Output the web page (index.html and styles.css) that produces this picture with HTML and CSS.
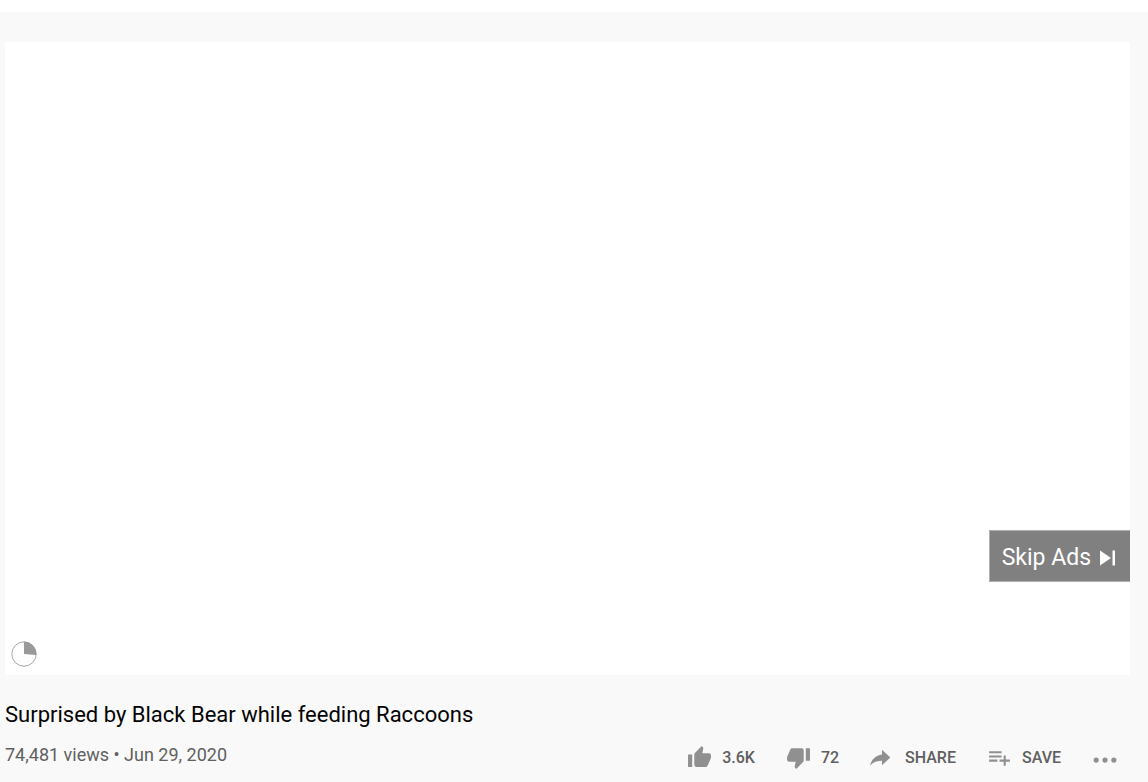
FILE: index.html
```html
<!DOCTYPE html>
<html lang="en">
<head>
    <meta charset="UTF-8">
    <meta name="viewport" content="width=device-width, initial-scale=1.0">
    <title>Surprised by Black Bear while feeding Raccoons</title>
    <link rel="stylesheet" href="styles.css">
</head>
<body>
    <header class="masthead"></header>

    <main class="watch">
        <div class="player">
            <svg class="ad-progress" viewBox="0 0 26 26" aria-hidden="true">
                <circle cx="13" cy="13" r="12.2" fill="none" stroke="#a8a8a8" stroke-width="1"/>
                <path d="M13 13V.8A12.2 12.2 0 0 1 25.2 14z" fill="#999"/>
            </svg>
            <button class="skip-button" type="button">
                <span>Skip Ads</span>
                <svg class="skip-icon" viewBox="0 0 16 16" aria-hidden="true">
                    <path d="M0 0.500L11 8L0 15.500zM12.500 0.500h2.500v15h-2.500z"/>
                </svg>
            </button>
        </div>

        <h1 class="title">Surprised by Black Bear while feeding Raccoons</h1>

        <div class="info">
            <p class="stats">74,481 views • Jun 29, 2020</p>
            <div class="actions">
                <button class="action" type="button">
                    <svg class="icon" viewBox="0 0 24 24" aria-hidden="true">
                        <path d="M1 21h4V9H1v12zm22-11c0-1.100-.9-2-2-2h-6.310l.95-4.570.03-.32c0-.41-.17-.79-.44-1.060L14.170 1 7.590 7.590C7.220 7.950 7 8.450 7 9v10c0 1.100.9 2 2 2h9c.83 0 1.540-.5 1.840-1.220l3.020-7.050c.09-.23.14-.47.14-.73v-2z"/>
                    </svg>
                    <span>3.6K</span>
                </button>
                <button class="action" type="button">
                    <svg class="icon" viewBox="0 0 24 24" aria-hidden="true">
                        <path d="M15 3H6c-.83 0-1.540.5-1.840 1.220l-3.020 7.050c-.09.23-.14.47-.14.73v2c0 1.100.9 2 2 2h6.310l-.95 4.570-.03.32c0 .41.17.79.44 1.060L9.830 23l6.590-6.590c.36-.36.58-.86.58-1.410V5c0-1.100-.9-2-2-2zm4 0v12h4V3h-4z"/>
                    </svg>
                    <span>72</span>
                </button>
                <button class="action" type="button">
                    <svg class="icon" viewBox="3 0 24 24" aria-hidden="true">
                        <path d="M14.500 9V4.500L22.500 12l-8 7.500V15C9.500 15 6 16.500 3 20c1-5 4.500-10 11.500-11z"/>
                    </svg>
                    <span>SHARE</span>
                </button>
                <button class="action" type="button">
                    <svg class="icon" viewBox="0 0 24 24" aria-hidden="true">
                        <path d="M14 10H2v2h12v-2zm0-4H2v2h12V6zm4 8v-4h-2v4h-4v2h4v4h2v-4h4v-2h-4zM2 16h8v-2H2v2z"/>
                    </svg>
                    <span>SAVE</span>
                </button>
                <button class="action" type="button" aria-label="More actions">
                    <svg class="icon" viewBox="0 0 24 24" aria-hidden="true">
                        <circle cx="4" cy="14.500" r="2.500"/>
                        <circle cx="12.500" cy="14.500" r="2.500"/>
                        <circle cx="21" cy="14.500" r="2.500"/>
                    </svg>
                </button>
            </div>
        </div>
    </main>
</body>
</html>
```

FILE: styles.css
```css
/* --- General Styles --- */
* {
    box-sizing: border-box;
}

body {
    margin: 0;
    min-height: 100vh;
    background-color: #f9f9f9;
    color: #030303;
    font-family: Roboto, sans-serif;
}

button {
    border: 0;
    padding: 0;
    background: none;
    font-family: inherit;
    cursor: pointer;
}

.masthead {
    height: 12px;
    background-color: #fff;
}

.watch {
    padding: 30px 18px 0 5px;
}

/* --- Player --- */
.player {
    position: relative;
    aspect-ratio: 16 / 9;
    background-color: #fff;
}

.ad-progress {
    position: absolute;
    left: 6px;
    bottom: 8px;
    width: 26px;
    height: 26px;
}

.skip-button {
    position: absolute;
    right: 0;
    bottom: 93px;
    display: flex;
    align-items: center;
    gap: 9px;
    height: 52px;
    padding: 4px 14px 0 12px;
    border: 1px solid #b0b0b0;
    border-right: 0;
    background-color: #808080;
    color: #fff;
    font-size: 23px;
}

.skip-icon {
    width: 16px;
    height: 16px;
    fill: #fff;
}

/* --- Video Info --- */
.title {
    margin: 24px 0 0;
    font-size: 22px;
    font-weight: 400;
    line-height: 32px;
}

.info {
    display: flex;
    justify-content: space-between;
    align-items: flex-start;
    margin-top: 10px;
    padding-right: 13px;
}

.stats {
    margin: 0;
    color: #606060;
    font-size: 18px;
    line-height: 28px;
}

.actions {
    display: flex;
    gap: 31px;
    margin-top: 4px;
}

.action {
    display: flex;
    align-items: center;
    gap: 10px;
    color: #606060;
    font-size: 16px;
    font-weight: 500;
    line-height: 25px;
}

.icon {
    width: 25px;
    height: 25px;
    fill: #909090;
}
```
